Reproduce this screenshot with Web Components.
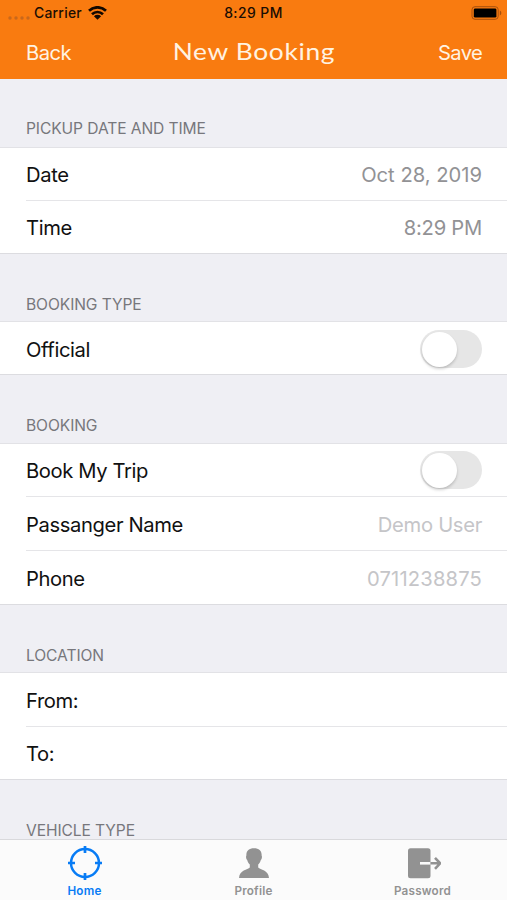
<!DOCTYPE html>
<html lang="en">
<head>
<meta charset="utf-8">
<title>New Booking</title>
<style>
  body { margin: 0; background: #efeff4; font-family: Inter, "Liberation Sans", sans-serif; color: #111; }
</style>
</head>
<body>
<booking-app></booking-app>
<script>
const define = (name, html, setup) => {
  const template = document.createElement('template');
  template.innerHTML = html;
  customElements.define(name, class extends HTMLElement {
    connectedCallback() {
      if (this.shadowRoot) return;
      this.attachShadow({ mode: 'open' }).append(template.content.cloneNode(true));
      if (setup) setup(this, this.shadowRoot);
    }
  });
};

define('status-bar', `
  <style>
    :host { display: grid; grid-template-columns: 1fr auto 1fr; align-items: center; height: 26px; color: #1a0d03; font-size: 13.9px; font-weight: 500; line-height: 26px; }
    .left { display: flex; align-items: center; padding-left: 8px; }
    .dots { margin: 9px 4px 0 0; }
    .wifi { margin-left: 6px; }
    .carrier { letter-spacing: 0.25px; }
    .time { letter-spacing: 0.45px; }
    .right { display: flex; justify-content: flex-end; padding-right: 5px; }
    svg { display: block; }
  </style>
  <div class="left">
    <svg class="dots" width="22" height="4"><g fill="#c8681c"><circle cx="2" cy="2" r="1.7"/><circle cx="8" cy="2" r="1.7"/><circle cx="14" cy="2" r="1.7"/><circle cx="20" cy="2" r="1.7"/></g></svg>
    <span class="carrier">Carrier</span>
    <svg class="wifi" width="19" height="14" viewBox="0 0 19 14"><g fill="none" stroke="#120800" stroke-width="2.7"><path d="M1 4.7A12.3 12.3 0 0 1 18 4.7"/><path d="M4 8.200A8 8 0 0 1 15 8.200"/></g><path d="M5.900 10.300A5.200 5.200 0 0 1 13.100 10.300L9.500 13.800Z" fill="#120800"/></svg>
  </div>
  <span class="time">8:29 PM</span>
  <div class="right">
    <svg width="31" height="14" viewBox="0 0 31 14"><rect x="1" y=".7" width="26.2" height="12.6" rx="3" fill="none" stroke="#a9500c" stroke-width="1"/><rect x="2.8" y="2.4" width="22.6" height="9.2" rx="1.4" fill="#000"/><path d="M28.8 4.6Q30.4 5.4 30.4 7T28.8 9.4Z" fill="#a9500c"/></svg>
  </div>`);

define('nav-bar', `
  <style>
    :host { display: grid; grid-template-columns: 1fr auto 1fr; align-items: center; height: 53px; padding: 0 25px 0 26px; color: #fff3e2; font-size: 20.2px; letter-spacing: -0.5px; }
    .title { font: 400 23.3px/28px Lato, sans-serif; letter-spacing: .6px; color: #fff3e2; transform: scaleX(1.13); padding-bottom: 4px; }
    .save { text-align: right; letter-spacing: -0.7px; }
  </style>
  <slot name="back"></slot><span class="title"><slot></slot></span><span class="save"><slot name="save"></slot></span>`);

define('form-section', `
  <style>
    :host { display: block; }
    h2 { margin: 0; box-sizing: border-box; height: var(--head, 68px); padding: 0 0 var(--pb, 9px) 26px; display: flex; align-items: flex-end; font-size: 15.6px; line-height: 16px; font-weight: 400; color: #77777c; letter-spacing: -0.1px; white-space: nowrap; }
    .rows { background: #fff; border-top: 1px solid #e2e2e6; border-bottom: 1px solid #dcdce0; }
  </style>
  <h2></h2><div class="rows"><slot></slot></div>`,
  (el, root) => { root.querySelector('h2').textContent = el.getAttribute('heading'); });

define('form-row', `
  <style>
    :host { display: block; padding-left: 26px; }
    .in { display: flex; box-sizing: border-box; align-items: center; justify-content: space-between; height: var(--h, 52px); padding: var(--pt, 0) 25px 0 0; font-size: 20.2px; white-space: nowrap; }
    :host(:not(:first-child)) .in { border-top: 1px solid #e5e5e8; box-sizing: border-box; height: calc(var(--h, 52px) + 1px); }
    .value { color: #929295; display: flex; letter-spacing: var(--vs, 0); }
    :host([placeholder]) .value { color: #c5c5c8; }
    .label { letter-spacing: -0.38px; }
  </style>
  <div class="in"><span class="label"></span><span class="value"><slot></slot></span></div>`,
  (el, root) => { root.querySelector('.label').textContent = el.getAttribute('label'); });

define('toggle-switch', `
  <style>
    :host { display: block; box-sizing: border-box; width: 62px; height: 38px; border-radius: 19px; background: #e6e6e6; padding: 1.5px; }
    i { display: block; width: 35px; height: 35px; border-radius: 50%; background: #fff; box-shadow: 0 2px 3px rgba(0,0,0,.18); }
  </style><i></i>`);

define('tab-item', `
  <style>
    :host { display: flex; flex-direction: column; align-items: center; flex: 1; padding-top: 5px; color: #929292; font-size: 11.7px; font-weight: 600; line-height: 16px; letter-spacing: .2px; }
    :host([active]) { color: #087cf5; }
    .icon { height: 38px; }
    ::slotted(svg) { display: block; }
  </style>
  <div class="icon"><slot name="icon"></slot></div><span><slot></slot></span>`);

define('booking-app', `
  <style>
    :host { display: flex; flex-direction: column; width: 507px; height: 900px; overflow: hidden; background: #efeff4; }
    header { flex: none; background: #f97b10; height: 79px; }
    main { flex: 1; min-height: 0; overflow: hidden; }
    footer { flex: none; display: flex; box-sizing: border-box; height: 61px; border-top: 1px solid #d9d9dc; background: #fbfbfb; }
  </style>
  <header>
    <status-bar></status-bar>
    <nav-bar><span slot="back">Back</span>New Booking<span slot="save">Save</span></nav-bar>
  </header>
  <main>
    <form-section heading="PICKUP DATE AND TIME" style="--pb:10px">
      <form-row label="Date">Oct 28, 2019</form-row>
      <form-row label="Time" style="--vs:-.25px;--pt:1px">8:29 PM</form-row>
    </form-section>
    <form-section heading="BOOKING TYPE" style="--head:67px;--pb:8px">
      <form-row label="Official" style="--pt:2px"><toggle-switch></toggle-switch></form-row>
    </form-section>
    <form-section heading="BOOKING">
      <form-row label="Book My Trip"><toggle-switch></toggle-switch></form-row>
      <form-row label="Passanger Name" placeholder style="--vs:-.3px;--h:53px;--pt:1px">Demo User</form-row>
      <form-row label="Phone" placeholder style="--vs:.15px;--h:53px;--pt:1px">0711238875</form-row>
    </form-section>
    <form-section heading="LOCATION" style="--head:67px;--pb:8px">
      <form-row label="From:" style="--h:53px;--pt:1px"></form-row>
      <form-row label="To:" style="--pt:1px"></form-row>
    </form-section>
    <form-section heading="VEHICLE TYPE" style="--head:69px;--pb:10px"></form-section>
  </main>
  <footer>
    <tab-item active>Home<svg slot="icon" width="36" height="36" viewBox="0 0 36 36" fill="none" stroke="#087cf5"><circle cx="18" cy="18" r="14" stroke-width="2.5"/><path d="M18 1v7M18 28v7M1 18h7M28 18h7" stroke-width="2.7"/></svg></tab-item>
    <tab-item>Profile<svg slot="icon" width="36" height="36" viewBox="0 0 36 36" fill="#929292"><path d="M18 3.2c5.2 0 8 2.900 7.600 7.400.7.800.3 3.500-.8 4.300-.5 2.200-1.600 3.600-2.600 4.500v3.200c2 2.200 10.400 2.400 10.800 10.300H3c.4-7.900 8.800-8.100 10.800-10.300v-3.200c-1-.9-2.100-2.300-2.600-4.500-1.100-.8-1.500-3.500-.8-4.300C10 6.100 12.800 3.200 18 3.200Z"/></svg></tab-item>
    <tab-item>Password<svg slot="icon" width="36" height="36" viewBox="0 0 36 36"><rect x="3" y="3.300" width="22.500" height="30" rx="2.500" fill="#929292"/><path d="M15 18.300h10.500" stroke="#fafafa" stroke-width="2.600"/><path d="M25.500 18.300h9M30 12.800l5.200 5.500-5.200 5.500" fill="none" stroke="#929292" stroke-width="2.600"/></svg></tab-item>
  </footer>`);
</script>
</body>
</html>
